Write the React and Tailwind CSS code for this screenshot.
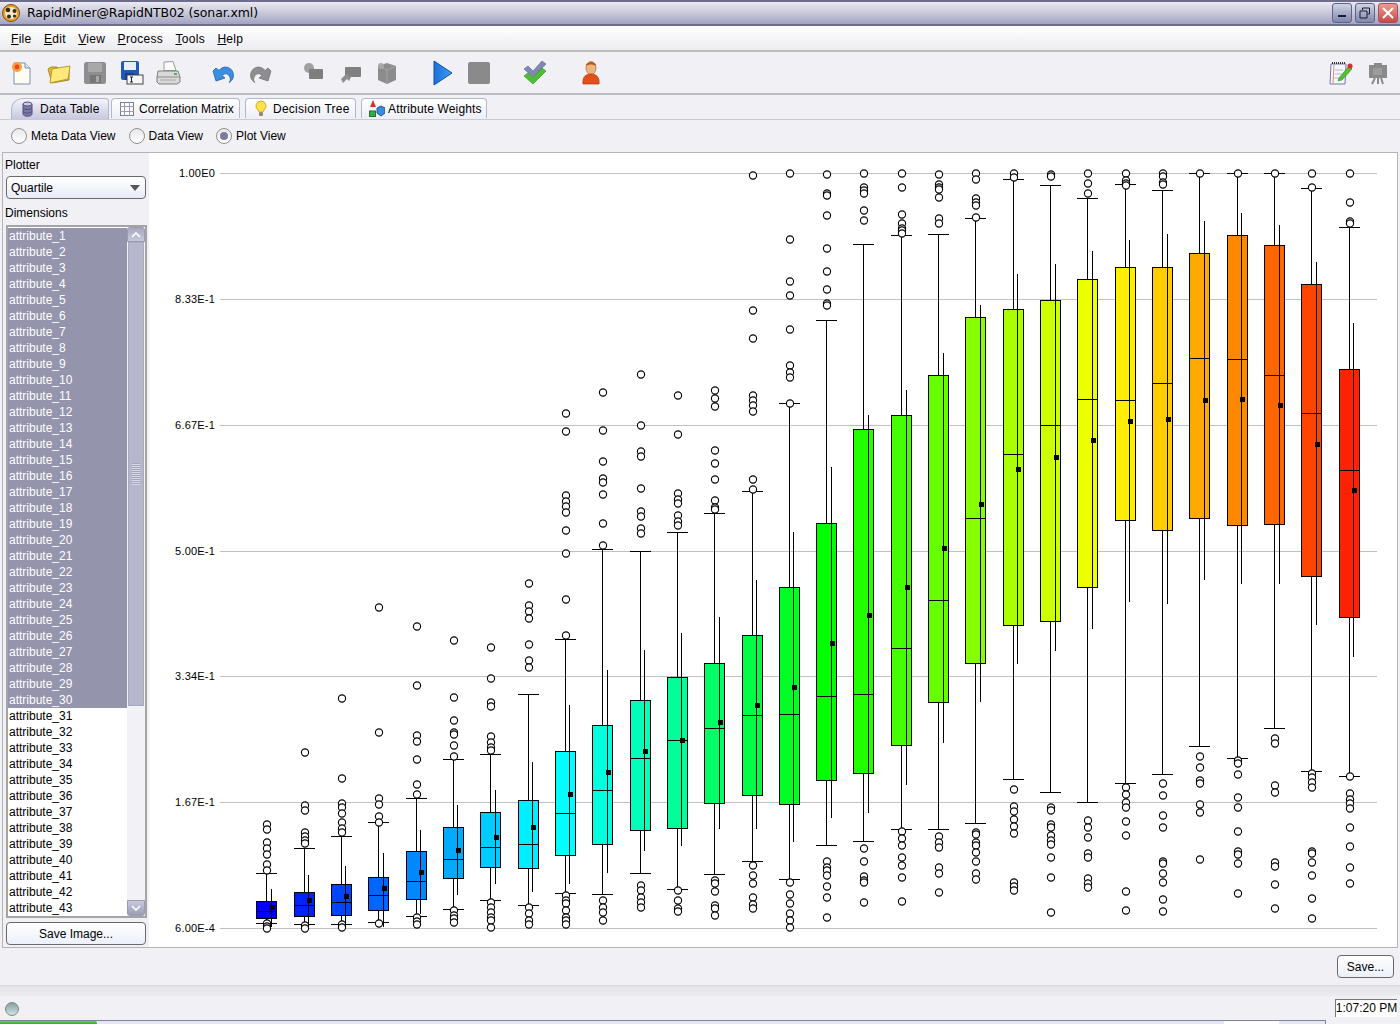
import React from 'react';

const ticks = [
  ['1.00E0', 173], ['8.33E-1', 299], ['6.67E-1', 425], ['5.00E-1', 551],
  ['3.34E-1', 676], ['1.67E-1', 802], ['6.00E-4', 928],
];

// x, color, box top, median, box bottom, whisker top, whisker bottom, mean x, mean y, std top, std bottom, outliers
const boxes = [
  [266, '#0000ff', 901, 911, 918, 873, 923, 272, 907, 889, 927, [824, 829, 842, 848, 854, 864, 870, 923, 926, 928]],
  [304, '#0022ff', 892, 905, 916, 848, 924, 309, 900, 875, 927, [752, 805, 810, 832, 836, 840, 843, 925, 928]],
  [341, '#0044ff', 884, 902, 915, 836, 924, 346, 896, 866, 927, [698, 778, 803, 807, 813, 822, 828, 832, 924, 927]],
  [378, '#0066ff', 877, 895, 910, 822, 922, 384, 888, 853, 927, [607, 732, 798, 804, 816, 822, 923]],
  [416, '#0088ff', 851, 881, 899, 798, 916, 421, 872, 830, 914, [626, 685, 735, 741, 759, 784, 794, 917, 921, 924]],
  [453, '#00aaff', 827, 859, 878, 759, 909, 458, 850, 805, 895, [640, 697, 720, 732, 734, 745, 756, 910, 915, 918, 922]],
  [490, '#00ccff', 812, 847, 867, 754, 900, 496, 837, 790, 884, [647, 678, 702, 706, 736, 742, 747, 750, 902, 907, 912, 917, 920, 927]],
  [528, '#00eeff', 800, 844, 868, 694, 905, 533, 827, 762, 892, [583, 605, 611, 618, 644, 660, 667, 907, 913, 920, 924]],
  [565, '#00ffff', 751, 813, 855, 639, 893, 570, 794, 705, 884, [413, 431, 495, 501, 506, 512, 530, 553, 599, 635, 895, 900, 903, 910, 917, 920, 924]],
  [602, '#00ffdd', 725, 790, 844, 549, 894, 608, 772, 670, 873, [392, 430, 461, 478, 482, 494, 523, 545, 900, 907, 912, 920]],
  [640, '#00ffbb', 700, 758, 830, 551, 873, 645, 751, 650, 851, [374, 425, 451, 456, 488, 511, 516, 528, 533, 885, 890, 897, 902, 907]],
  [677, '#00ff99', 677, 740, 828, 532, 889, 682, 740, 633, 846, [395, 434, 493, 499, 503, 515, 521, 525, 890, 900, 908, 911]],
  [714, '#00ff66', 663, 728, 803, 513, 874, 720, 722, 617, 829, [390, 398, 406, 450, 463, 479, 500, 507, 509, 880, 883, 891, 905, 908, 915]],
  [752, '#00ff44', 635, 715, 795, 491, 861, 757, 705, 580, 829, [175, 310, 338, 395, 400, 405, 411, 479, 489, 865, 875, 883, 897, 904, 908]],
  [789, '#00ff22', 587, 714, 804, 403, 879, 794, 687, 532, 842, [173, 239, 281, 295, 329, 365, 372, 377, 403, 882, 894, 903, 913, 920, 927]],
  [826, '#00ff00', 523, 696, 780, 320, 845, 832, 643, 467, 818, [174, 193, 195, 215, 248, 271, 289, 303, 305, 861, 867, 870, 875, 886, 897, 917]],
  [863, '#22ff00', 429, 694, 773, 244, 841, 869, 615, 415, 813, [173, 187, 190, 193, 210, 220, 848, 861, 876, 880, 882, 902]],
  [901, '#44ff00', 415, 648, 745, 235, 829, 907, 587, 390, 785, [173, 187, 214, 223, 228, 230, 233, 831, 838, 845, 857, 865, 877, 901]],
  [938, '#66ff00', 375, 600, 702, 234, 829, 944, 548, 353, 743, [174, 184, 187, 189, 197, 218, 223, 836, 842, 847, 867, 873, 892]],
  [975, '#88ff00', 317, 518, 663, 218, 823, 981, 504, 305, 702, [173, 179, 198, 202, 205, 217, 832, 834, 842, 845, 852, 861, 873, 879]],
  [1013, '#aaff00', 309, 454, 625, 179, 779, 1018, 469, 274, 664, [173, 177, 789, 806, 811, 819, 826, 833, 882, 886, 890]],
  [1050, '#ccff00', 300, 425, 621, 185, 792, 1056, 457, 264, 651, [174, 176, 807, 810, 824, 827, 835, 840, 844, 857, 877, 912]],
  [1087, '#eeff00', 279, 399, 587, 198, 802, 1093, 440, 251, 629, [173, 183, 193, 820, 827, 837, 853, 857, 878, 883, 887]],
  [1125, '#ffee00', 267, 400, 520, 184, 783, 1130, 421, 240, 602, [173, 180, 183, 185, 787, 794, 802, 807, 821, 835, 891, 910]],
  [1162, '#ffcc00', 267, 383, 530, 190, 774, 1168, 419, 234, 604, [173, 176, 182, 184, 783, 795, 815, 827, 861, 863, 873, 882, 899, 911]],
  [1199, '#ffaa00', 253, 358, 518, 173, 746, 1205, 400, 221, 580, [173, 756, 767, 780, 783, 804, 812, 859]],
  [1237, '#ff8800', 235, 359, 525, 173, 758, 1242, 399, 213, 584, [173, 760, 763, 774, 797, 807, 831, 851, 854, 863, 893]],
  [1274, '#ff6600', 245, 375, 524, 173, 728, 1280, 405, 225, 584, [173, 738, 743, 785, 792, 862, 866, 884, 908]],
  [1311, '#ff4400', 284, 413, 576, 188, 771, 1317, 444, 262, 625, [173, 187, 773, 777, 782, 787, 851, 853, 862, 875, 898, 918]],
  [1349, '#ff2200', 369, 470, 617, 227, 776, 1354, 490, 323, 657, [173, 202, 221, 223, 776, 793, 799, 803, 808, 827, 846, 867, 883]],
];

function QuartilePlot() {
  return (
    <svg width="1247" height="795" viewBox="149 153 1247 795" className="block">
      {ticks.map(([label, y]) => (
        <g key={label}>
          <line x1="220" x2="1377" y1={y + 0.5} y2={y + 0.5} stroke="#c0c0c0" shapeRendering="crispEdges" />
          <text x="215" y={y + 4} textAnchor="end" fontSize="11" fill="#000" letterSpacing="0.2">{label}</text>
        </g>
      ))}
      {boxes.map(([x, color, top, med, bot, wTop, wBot, mx, my, sTop, sBot, outliers]) => (
        <g key={x} shapeRendering="crispEdges" stroke="#000" fill="none">
          <line x1={x + 0.5} x2={x + 0.5} y1={wTop} y2={wBot} />
          <line x1={x - 10} x2={x + 11} y1={wTop + 0.5} y2={wTop + 0.5} />
          <line x1={x - 10} x2={x + 11} y1={wBot + 0.5} y2={wBot + 0.5} />
          <rect x={x - 9.5} y={top + 0.5} width="20" height={bot - top} fill={color} />
          <line x1={x - 10} x2={x + 11} y1={med + 0.5} y2={med + 0.5} />
          {outliers.map((y, i) => (
            <circle key={i} cx={x + 1} cy={y + 0.5} r="3.6" fill="#fff" strokeWidth="1.1" shapeRendering="auto" />
          ))}
          <line x1={mx - 0.5} x2={mx - 0.5} y1={sTop} y2={sBot} />
          <rect x={mx - 2} y={my - 2} width="5" height="5" fill="#000" stroke="none" />
        </g>
      ))}
    </svg>
  );
}

const NewIcon = () => (
  <svg width="24" height="26" viewBox="0 0 24 26">
    <path d="M4 3h11l5 5v16H4z" fill="#fdfdf4" stroke="#7c8fb0" />
    <path d="M15 3v5h5" fill="#dfe6f2" stroke="#7c8fb0" />
    <circle cx="7" cy="7" r="5" fill="#f9a13a" />
    <circle cx="7" cy="7" r="2.4" fill="#e8452a" />
  </svg>
);
const OpenIcon = () => (
  <svg width="26" height="24" viewBox="0 0 26 24">
    <path d="M2 8l3-2 6 0 2 2 10-1 0 12-17 3z" fill="#e6b92c" stroke="#a48a2a" />
    <path d="M6 8l18-3-2 13-18 4z" fill="#ffe97a" stroke="#b89a28" />
  </svg>
);
const FloppyIcon = ({ body = '#8e8e8e', dark = '#777', light = '#a8a8a8' }) => (
  <svg width="24" height="24" viewBox="0 0 24 24">
    <rect x="1" y="1" width="22" height="22" rx="2.5" fill={body} />
    <rect x="5" y="2" width="14" height="9" fill={light} />
    <rect x="7" y="14" width="11" height="8" fill={dark} />
    <rect x="13" y="15" width="3" height="6" fill={light} />
  </svg>
);
const SaveAsIcon = () => (
  <svg width="24" height="24" viewBox="0 0 24 24">
    <rect x="1" y="0" width="18" height="19" rx="2" fill="#2159b8" />
    <rect x="4" y="1" width="12" height="8" fill="#e8eef8" />
    <rect x="5" y="12" width="9" height="7" fill="#12408e" />
    <rect x="7" y="14" width="16" height="9" fill="#f6f6f6" stroke="#444" />
    <path d="M10 16h3M10 21h3M11.5 16v5" stroke="#222" fill="none" />
  </svg>
);
const PrintIcon = () => (
  <svg width="26" height="24" viewBox="0 0 26 24">
    <path d="M9 1l9-0.5 3 9H9z" fill="#fafafa" stroke="#9a9a9a" />
    <path d="M3 10h20l2 6v5l-3 2H4l-2-2v-5z" fill="#d8d8d8" stroke="#7f7f7f" />
    <path d="M2 16h23" stroke="#8c8c8c" />
    <path d="M5 19h16" stroke="#a8a8a8" />
    <rect x="19" y="12" width="3" height="2" fill="#55b050" />
  </svg>
);
const UndoIcon = () => (
  <svg width="24" height="22" viewBox="0 0 24 22">
    <path d="M1 9l3 10 9-3-3-2.5c3-3 7-2 8 2 1 2 0 4-1 5 4-2 6-7 3-12-3-4-9-5-13 0L4 6z" fill="#3b8fe0" stroke="#1a5fb0" strokeWidth="0.8" />
  </svg>
);
const RedoIcon = () => (
  <svg width="24" height="22" viewBox="0 0 24 22">
    <path d="M23 9l-3 10-9-3 3-2.5c-3-3-7-2-8 2-1 2 0 4 1 5-4-2-6-7-3-12 3-4 9-5 13 0l3-2.5z" fill="#8e8e8e" stroke="#777" strokeWidth="0.8" />
  </svg>
);
const GreyBlockIcon = () => (
  <svg width="24" height="22" viewBox="0 0 24 22">
    <circle cx="7" cy="6" r="5" fill="#a0a0a0" />
    <rect x="7" y="7" width="14" height="10" rx="1" fill="#7e7e7e" />
  </svg>
);
const GreyPinIcon = () => (
  <svg width="24" height="22" viewBox="0 0 24 22">
    <rect x="7" y="5" width="16" height="10" rx="1" fill="#808080" />
    <path d="M8 12l-5 5 2 4 4-4 2 2 2-4z" fill="#8e8e8e" />
  </svg>
);
const GreyCubeIcon = () => (
  <svg width="24" height="24" viewBox="0 0 24 24">
    <path d="M3 5l9-3 9 3v14l-9 4-9-4z" fill="#8c8c8c" />
    <path d="M3 5l9 4 9-4M12 9v14" stroke="#a4a4a4" fill="none" />
    <circle cx="6" cy="5" r="3" fill="#a8a8a8" />
  </svg>
);
const PlayIcon = () => (
  <svg width="20" height="26" viewBox="0 0 20 26">
    <defs>
      <linearGradient id="playFill" x1="0" x2="1" y1="0" y2="0">
        <stop offset="0" stopColor="#1c6fd8" />
        <stop offset="1" stopColor="#3c9cf0" />
      </linearGradient>
    </defs>
    <path d="M1 1l18 12L1 25z" fill="url(#playFill)" stroke="#0e50a8" />
  </svg>
);
const StopIcon = () => <div className="w-[22px] h-[22px] rounded-[2px] bg-[#8a8a8a]" />;
const CheckIcon = () => (
  <svg width="24" height="26" viewBox="0 0 24 26">
    <path d="M1 9l4-3 5 5L19 1l4 3-13 13z" fill="#8088b4" stroke="#5a628c" strokeWidth="0.6" />
    <path d="M1 16l4-3 5 5 9-10 4 3-13 13z" fill="#4cc030" stroke="#2a8a1a" strokeWidth="0.6" />
  </svg>
);
const UserIcon = () => (
  <svg width="20" height="26" viewBox="0 0 20 26">
    <ellipse cx="10" cy="8" rx="5" ry="6.5" fill="#f0b47e" stroke="#b8642a" strokeWidth="0.7" />
    <path d="M5 6c0-5 10-5 10 0-3-2-7-2-10 0z" fill="#a85a1c" />
    <path d="M2 24c-1-7 3-10 8-10s9 3 8 10z" fill="#e44e1c" stroke="#b03a10" strokeWidth="0.7" />
  </svg>
);
const NotesIcon = () => (
  <svg width="24" height="24" viewBox="0 0 24 24">
    <path d="M2 3h15l-1 20H1z" fill="#f6f6ff" stroke="#6e78a8" />
    <path d="M3 2h13" stroke="#333" strokeWidth="2" strokeDasharray="1 1" />
    <path d="M5 4l-1 18" stroke="#e88c5c" />
    <path d="M6 9h8M6 13h7M5 17h6" stroke="#a8b4d8" />
    <path d="M10 17l10-12 3 3-10 11-4 1z" fill="#58c030" stroke="#2e8a1a" strokeWidth="0.6" />
    <circle cx="21" cy="5" r="2.6" fill="#d83030" />
  </svg>
);
const EaselIcon = () => (
  <svg width="20" height="24" viewBox="0 0 20 24">
    <path d="M6 2h8v2h5v13H1V4h5z" fill="#8a8a8a" />
    <rect x="5" y="7" width="9" height="7" fill="#9c9c9c" />
    <path d="M7 17l-3 6M13 17l2 6M10 17v6" stroke="#8a8a8a" strokeWidth="2" fill="none" />
  </svg>
);
const LogoIcon = () => (
  <svg width="20" height="20" viewBox="0 0 20 20">
    <circle cx="10" cy="10" r="8.5" fill="#e8a030" stroke="#7a5010" />
    <circle cx="10" cy="10" r="6" fill="#f4e8d0" />
    <circle cx="7" cy="7" r="2.3" fill="#3a2a18" />
    <circle cx="13.5" cy="8" r="2" fill="#3a2a18" />
    <circle cx="8" cy="13.5" r="2" fill="#3a2a18" />
    <circle cx="13.5" cy="13" r="1.6" fill="#3a2a18" />
  </svg>
);
const DbIcon = () => (
  <svg width="11" height="16" viewBox="0 0 11 16">
    <path d="M1 3v10c0 3 9 3 9 0V3z" fill="#7a7aa8" stroke="#50507c" />
    <ellipse cx="5.5" cy="3" rx="4.5" ry="2" fill="#c8c8e0" stroke="#50507c" />
    <path d="M1 7c1 2 8 2 9 0M1 10.5c1 2 8 2 9 0" stroke="#50507c" fill="none" />
  </svg>
);
const GridIcon = () => (
  <svg width="14" height="14" viewBox="0 0 14 14">
    <rect x="0.5" y="0.5" width="13" height="13" fill="#fff" stroke="#7a7a9c" />
    <path d="M4.5 0v14M9.5 0v14M0 4.5h14M0 9.5h14" stroke="#9a9ab8" />
  </svg>
);
const BulbIcon = () => (
  <svg width="12" height="17" viewBox="0 0 12 17">
    <path d="M6 1a5 5 0 0 1 3 9l-1 2H4l-1-2a5 5 0 0 1 3-9z" fill="#ffe24a" stroke="#d8a820" />
    <rect x="4" y="12" width="4" height="4" rx="1" fill="#9a8a68" />
  </svg>
);
const ShapesIcon = () => (
  <svg width="16" height="17" viewBox="0 0 16 17">
    <path d="M4 0l3 7H1z" fill="#e03020" />
    <rect x="0.5" y="11" width="6" height="5.5" fill="#30b040" stroke="#187a28" />
    <path d="M8 8l4-2 4 2v5l-4 3-4-3z" fill="#3c8ad8" stroke="#1c5aa0" />
  </svg>
);

const toolGroups = [
  { gap: 'mr-[19px]', icons: [<NewIcon />, <OpenIcon />, <FloppyIcon />, <SaveAsIcon />, <PrintIcon />] },
  { gap: 'mr-[17px]', icons: [<UndoIcon />, <RedoIcon />] },
  { gap: 'mr-[19.5px]', icons: [<GreyBlockIcon />, <GreyPinIcon />, <GreyCubeIcon />] },
  { gap: 'mr-[19.5px]', icons: [<PlayIcon />, <StopIcon />] },
  { gap: 'mr-[19.5px]', icons: [<CheckIcon />] },
  { gap: 'mr-[19.5px]', icons: [<UserIcon />] },
];

const tabs = [
  { label: 'Data Table', icon: <DbIcon />, cls: 'w-[98px] mr-[-3px] pl-[10px] gap-[7px]', active: true },
  { label: 'Correlation Matrix', icon: <GridIcon />, cls: 'w-[129px] pl-[8px] gap-[5px]', track: 'tracking-[0px]' },
  { label: 'Decision Tree', icon: <BulbIcon />, cls: 'w-[111px] pl-[9px] gap-[6px]', track: 'tracking-[0.25px]' },
  { label: 'Attribute Weights', icon: <ShapesIcon />, cls: 'w-[126px] pl-[7px] gap-[3px]', track: 'tracking-[0.15px]' },
];

function WinButton({ danger, children }) {
  return (
    <div className={danger
      ? 'w-[20px] h-[20px] rounded-[3px] border border-[#a05060] bg-gradient-to-b from-[#ee9a90] to-[#c84848] flex items-center justify-center'
      : 'w-[20px] h-[20px] rounded-[3px] border border-[#5c6488] bg-gradient-to-b from-[#d0d4e6] to-[#8088ac] flex items-center justify-center'}>
      {children}
    </div>
  );
}

function Radio({ label, checked }) {
  return (
    <div className="flex items-center gap-[4px]">
      <div className="w-[16px] h-[16px] rounded-full border border-[#909090] bg-gradient-to-b from-[#e8e8ec] to-white flex items-center justify-center">
        {checked && <div className="w-[8px] h-[8px] rounded-full bg-[#7c7c9c]" />}
      </div>
      <span>{label}</span>
    </div>
  );
}

function Scrollbar() {
  return (
    <div className="w-[18px] flex flex-col bg-[#f2f2f6]">
      <div className="h-[15px] bg-gradient-to-b from-[#a8a8c0] to-[#c8c8dc] rounded-t-[3px] border border-[#9a9ab2] flex items-center justify-center">
        <svg width="10" height="6" viewBox="0 0 10 6"><path d="M1 5l4-4 4 4" stroke="#fff" strokeWidth="1.6" fill="none" /></svg>
      </div>
      <div className="h-[464px] mx-[1px] bg-[#b6b6cc] border border-[#a8a8c0] flex items-center justify-center">
        <div className="w-[8px] h-[22px] bg-[repeating-linear-gradient(0deg,#d8d8e6_0px,#d8d8e6_1px,#a4a4bc_1px,#a4a4bc_2px)]" />
      </div>
      <div className="flex-1" />
      <div className="h-[16px] bg-gradient-to-b from-[#c8c8dc] to-[#9c9cb6] rounded-b-[3px] border border-[#9a9ab2] flex items-center justify-center">
        <svg width="10" height="6" viewBox="0 0 10 6"><path d="M1 1l4 4 4-4" stroke="#fff" strokeWidth="1.6" fill="none" /></svg>
      </div>
    </div>
  );
}

const btnClass = 'flex items-center justify-center rounded-[4px] border border-[#6a6a6a] bg-gradient-to-b from-white to-[#ecf0fa] text-black';

export default function App() {
  const attrs = Array.from({ length: 43 }, (_, i) => `attribute_${i + 1}`);
  return (
    <div className="w-[1400px] h-[1024px] overflow-hidden flex flex-col bg-[#f0f0f5] text-black text-[12px] font-['Liberation_Sans',Arial,sans-serif]">
      {/* title bar */}
      <div className="h-[26px] shrink-0 flex items-center justify-between border-y-2 border-[#6e6e8c] bg-gradient-to-b from-[#eaeaf2] via-[#c8c8da] to-[#a4a4c0]">
        <div className="flex items-center">
          <div className="ml-[1px] mr-[6px]"><LogoIcon /></div>
          <span className="text-[12.5px] font-['DejaVu_Sans',sans-serif] tracking-[-0.1px]">RapidMiner@RapidNTB02 (sonar.xml)</span>
        </div>
        <div className="flex items-center gap-[3px] mr-[2px]">
          <WinButton>
            <div className="w-[8px] h-[2px] bg-[#1a1a2a] mt-[6px]" />
          </WinButton>
          <WinButton>
            <svg width="12" height="12" viewBox="0 0 12 12"><path d="M3.5 3V1h7v6h-2M1 4h7v7H1z" stroke="#1a1a2a" fill="none" /></svg>
          </WinButton>
          <WinButton danger>
            <svg width="12" height="12" viewBox="0 0 12 12"><path d="M1 1l10 10M11 1L1 11" stroke="#fff" strokeWidth="2" /></svg>
          </WinButton>
        </div>
      </div>

      {/* menu */}
      <div className="h-[26px] shrink-0 flex items-center gap-[12.4px] pl-[11px] pt-[1px] tracking-[0.3px] border-b-2 border-[#bcbcbc] bg-gradient-to-b from-white to-[#ececf0]">
        <span><u>F</u>ile</span>
        <span><u>E</u>dit</span>
        <span><u>V</u>iew</span>
        <span><u>P</u>rocess</span>
        <span><u>T</u>ools</span>
        <span><u>H</u>elp</span>
      </div>

      {/* toolbar */}
      <div className="h-[43px] shrink-0 flex items-center justify-between pl-[4px] border-b-2 border-[#bcbcbc]">
        <div className="flex items-center">
          {toolGroups.map((group, g) => (
            <div key={g} className={`flex items-center ${group.gap}`}>
              {group.icons.map((icon, i) => (
                <div key={i} className="w-[36.5px] flex items-center justify-center">{icon}</div>
              ))}
            </div>
          ))}
        </div>
        <div className="flex items-center mr-[4px]">
          <div className="w-[36.5px] flex items-center justify-center"><NotesIcon /></div>
          <div className="w-[36.5px] flex items-center justify-center"><EaselIcon /></div>
        </div>
      </div>

      {/* tabs */}
      <div className="h-[25px] shrink-0 flex items-end gap-[5px] pl-[11px] border-b border-[#c8c8d8]">
        {tabs.map((t) => (
          <div
            key={t.label}
            className={t.active
              ? `${t.cls} h-[21px] flex items-center rounded-tl-[12px] rounded-tr-[4px] border border-b-0 border-[#b0b8d0] bg-gradient-to-b from-[#f4f4fa] to-[#c8c8e0]`
              : `${t.cls} h-[20px] flex items-center mb-[1px] rounded-t-[4px] border border-b-0 border-[#b0b8d0] bg-gradient-to-b from-white to-[#eeeef6]`}
          >
            {t.icon}
            <span className={`${t.track || 'tracking-[0.25px]'} whitespace-nowrap`}>{t.label}</span>
          </div>
        ))}
      </div>

      {/* radios */}
      <div className="h-[32px] shrink-0 flex items-center gap-[13px] pl-[11px]">
        <Radio label="Meta Data View" />
        <Radio label="Data View" />
        <Radio label="Plot View" checked />
      </div>

      {/* main */}
      <div className="h-[796px] shrink-0 flex border-y border-x border-[#b4b4b4] mx-[2px]">
        <div className="w-[146px] shrink-0 flex flex-col pl-[3px] pr-[2px]">
          <div className="h-[23px] flex items-center ml-[-1px]">Plotter</div>
          <div className="h-[23px] mr-[1px] flex items-center justify-between pl-[4px] pr-[5px] rounded-[4px] border border-[#6a6a6a] bg-gradient-to-b from-white to-[#e8ecf8]">
            <span>Quartile</span>
            <svg width="10" height="6" viewBox="0 0 10 6"><path d="M0 0h10L5 6z" fill="#555" /></svg>
          </div>
          <div className="h-[26px] flex items-center pt-[2px] ml-[-1px]">Dimensions</div>
          <div className="h-[693px] flex border-2 border-[#a4a4a4]">
            <div className="flex-1 bg-white overflow-hidden pt-[1px]">
              {attrs.map((a, i) => (
                <div key={a} className={i < 30
                  ? 'h-[16px] pl-[1px] flex items-center bg-[#9494ac] text-white'
                  : 'h-[16px] pl-[1px] flex items-center'}>{a}</div>
              ))}
            </div>
            <Scrollbar />
          </div>
          <div className={`${btnClass} h-[23px] mt-[4px] mr-[1px]`}>Save Image...</div>
        </div>
        <div className="flex-1 bg-white overflow-hidden">
          <QuartilePlot />
        </div>
      </div>

      {/* save row */}
      <div className="h-[37px] shrink-0 flex items-center justify-end pr-[6px]">
        <div className={`${btnClass} w-[57px] h-[23px]`}>Save...</div>
      </div>

      {/* status */}
      <div className="h-[11px] shrink-0 border-t border-[#d8d8dc] bg-gradient-to-b from-[#e4e4e8] to-[#ececf0]" />
      <div className="h-[24px] shrink-0 flex items-center justify-between pl-[5px] pr-[3px]">
        <div className="w-[14px] h-[14px] rounded-full border border-[#7a8a8a] bg-gradient-to-b from-[#8aa0a0] to-[#d0e4e4] mt-[1px]" />
        <div className="w-[62px] h-[18px] flex items-center justify-center bg-white border-l border-t border-[#777] whitespace-nowrap mb-[1px]">1:07:20 PM</div>
      </div>
      <div className="flex-1 flex border-t border-[#8080a0] border-r mr-[74px]">
        <div className="w-[97px] bg-gradient-to-b from-[#6ad050] to-[#38a828] rounded-tr-[2px]" />
        <div className="w-[1127px] bg-[#e6e6f0]" />
        <div className="w-[55px] bg-white" />
        <div className="flex-1 bg-[#e6e6f0]" />
      </div>
    </div>
  );
}
